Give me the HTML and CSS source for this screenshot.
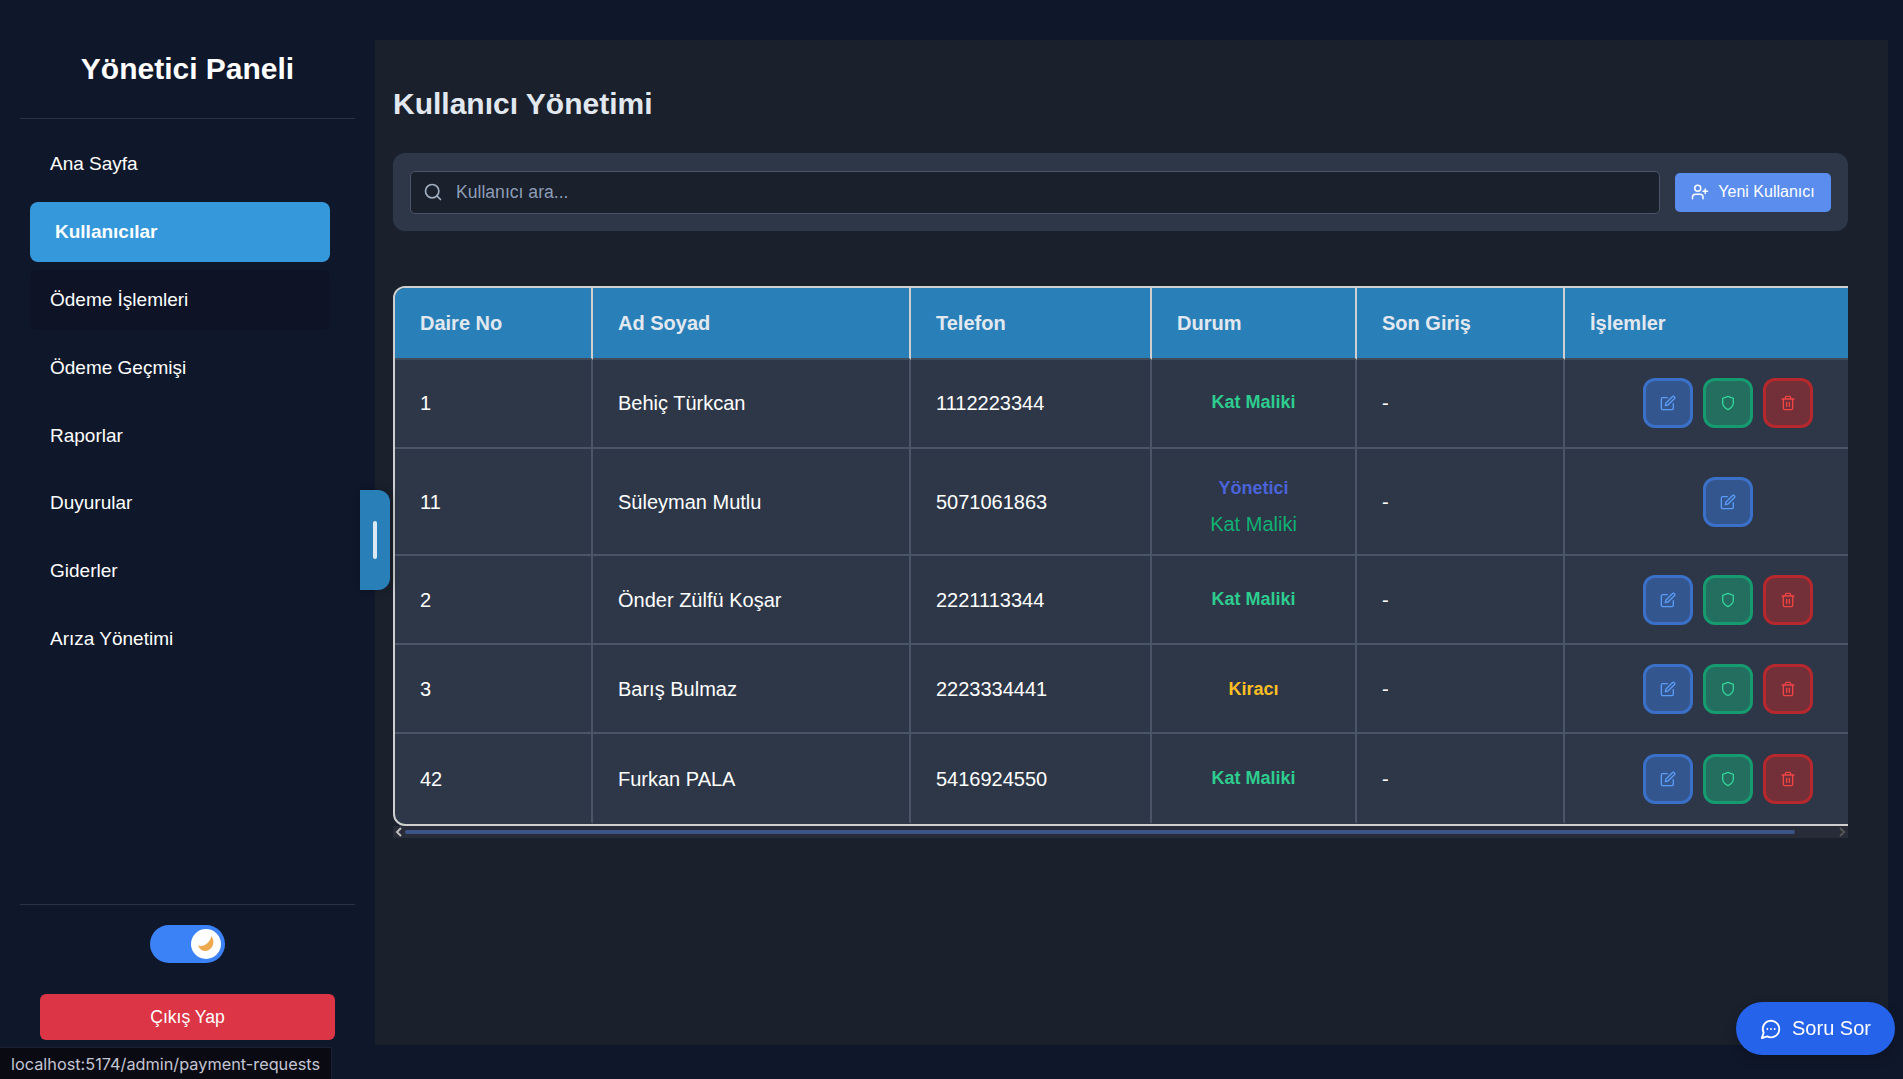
FILE: index.html
```html
<!DOCTYPE html>
<html lang="tr">
<head>
    <meta charset="UTF-8">
    <title>Yönetici Paneli</title>
    <link rel="stylesheet" href="styles.css">
</head>
<body>
    <aside class="sidebar">
        <div class="sidebar-header">
            <h2>Yönetici Paneli</h2>
        </div>
        <nav class="sidebar-nav">
            <a href="#" class="nav-item">Ana Sayfa</a>
            <a href="#" class="nav-item active">Kullanıcılar</a>
            <a href="#" class="nav-item hovered">Ödeme İşlemleri</a>
            <a href="#" class="nav-item">Ödeme Geçmişi</a>
            <a href="#" class="nav-item">Raporlar</a>
            <a href="#" class="nav-item">Duyurular</a>
            <a href="#" class="nav-item">Giderler</a>
            <a href="#" class="nav-item">Arıza Yönetimi</a>
        </nav>
        <div class="sidebar-footer">
            <div class="theme-toggle">
                <span class="toggle-knob">
                    <svg width="18" height="18" viewBox="0 0 18 18"><path d="M14.500 1C18 6 16.500 13 11 15.500 7 17 2.500 15 1 10.500 4.500 11.500 8 10.500 10.500 8 12.500 6 14 3.500 14.500 1z" fill="#eea94e"/></svg>
                </span>
            </div>
            <button class="logout-button">Çıkış Yap</button>
        </div>
    </aside>

    <button class="collapse-handle" aria-label="Menü"><span></span></button>

    <main class="content">
        <h1>Kullanıcı Yönetimi</h1>

        <div class="toolbar">
            <div class="search-box">
                <svg width="20" height="20" viewBox="0 0 24 24" fill="none" stroke="#a0aec0" stroke-width="2" stroke-linecap="round" stroke-linejoin="round"><circle cx="11" cy="11" r="8"/><path d="m21 21-4.300-4.300"/></svg>
                <input type="text" placeholder="Kullanıcı ara...">
            </div>
            <button class="new-user-button">
                <svg width="18" height="18" viewBox="0 0 24 24" fill="none" stroke="currentColor" stroke-width="2" stroke-linecap="round" stroke-linejoin="round"><path d="M16 21v-2a4 4 0 0 0-4-4H6a4 4 0 0 0-4 4v2"/><circle cx="9" cy="7" r="4"/><path d="M19 8v6M22 11h-6"/></svg>
                Yeni Kullanıcı
            </button>
        </div>

        <div class="table-wrap">
            <table class="users-table">
                <colgroup>
                    <col class="col-no"><col class="col-name"><col class="col-phone"><col class="col-status"><col class="col-login"><col class="col-actions">
                </colgroup>
                <thead>
                    <tr>
                        <th>Daire No</th>
                        <th>Ad Soyad</th>
                        <th>Telefon</th>
                        <th>Durum</th>
                        <th>Son Giriş</th>
                        <th>İşlemler</th>
                    </tr>
                </thead>
                <tbody>
                    <tr>
                        <td>1</td>
                        <td>Behiç Türkcan</td>
                        <td>1112223344</td>
                        <td class="status"><span class="role owner">Kat Maliki</span></td>
                        <td>-</td>
                        <td class="action-cell">
                            <div class="actions">
                                <button class="icon-btn edit"><svg width="16" height="16" viewBox="0 0 24 24" fill="none" stroke="currentColor" stroke-width="2" stroke-linecap="round" stroke-linejoin="round"><path d="M11 4H4a2 2 0 0 0-2 2v14a2 2 0 0 0 2 2h14a2 2 0 0 0 2-2v-7"/><path d="M18.500 2.500a2.121 2.121 0 0 1 3 3L12 15l-4 1 1-4 9.500-9.500z"/></svg></button>
                                <button class="icon-btn shield"><svg width="16" height="16" viewBox="0 0 24 24" fill="none" stroke="currentColor" stroke-width="2" stroke-linecap="round" stroke-linejoin="round"><path d="M12 22s8-4 8-10V5l-8-3-8 3v7c0 6 8 10 8 10z"/></svg></button>
                                <button class="icon-btn trash"><svg width="16" height="16" viewBox="0 0 24 24" fill="none" stroke="currentColor" stroke-width="2" stroke-linecap="round" stroke-linejoin="round"><path d="M3 6h18M19 6v14a2 2 0 0 1-2 2H7a2 2 0 0 1-2-2V6M8 6V4a2 2 0 0 1 2-2h4a2 2 0 0 1 2 2v2M10 11v6M14 11v6"/></svg></button>
                            </div>
                        </td>
                    </tr>
                    <tr class="two-lines">
                        <td>11</td>
                        <td>Süleyman Mutlu</td>
                        <td>5071061863</td>
                        <td class="status">
                            <span class="role manager">Yönetici</span>
                            <span class="role-sub">Kat Maliki</span>
                        </td>
                        <td>-</td>
                        <td class="action-cell">
                            <div class="actions">
                                <button class="icon-btn edit"><svg width="16" height="16" viewBox="0 0 24 24" fill="none" stroke="currentColor" stroke-width="2" stroke-linecap="round" stroke-linejoin="round"><path d="M11 4H4a2 2 0 0 0-2 2v14a2 2 0 0 0 2 2h14a2 2 0 0 0 2-2v-7"/><path d="M18.500 2.500a2.121 2.121 0 0 1 3 3L12 15l-4 1 1-4 9.500-9.500z"/></svg></button>
                            </div>
                        </td>
                    </tr>
                    <tr>
                        <td>2</td>
                        <td>Önder Zülfü Koşar</td>
                        <td>2221113344</td>
                        <td class="status"><span class="role owner">Kat Maliki</span></td>
                        <td>-</td>
                        <td class="action-cell">
                            <div class="actions">
                                <button class="icon-btn edit"><svg width="16" height="16" viewBox="0 0 24 24" fill="none" stroke="currentColor" stroke-width="2" stroke-linecap="round" stroke-linejoin="round"><path d="M11 4H4a2 2 0 0 0-2 2v14a2 2 0 0 0 2 2h14a2 2 0 0 0 2-2v-7"/><path d="M18.500 2.500a2.121 2.121 0 0 1 3 3L12 15l-4 1 1-4 9.500-9.500z"/></svg></button>
                                <button class="icon-btn shield"><svg width="16" height="16" viewBox="0 0 24 24" fill="none" stroke="currentColor" stroke-width="2" stroke-linecap="round" stroke-linejoin="round"><path d="M12 22s8-4 8-10V5l-8-3-8 3v7c0 6 8 10 8 10z"/></svg></button>
                                <button class="icon-btn trash"><svg width="16" height="16" viewBox="0 0 24 24" fill="none" stroke="currentColor" stroke-width="2" stroke-linecap="round" stroke-linejoin="round"><path d="M3 6h18M19 6v14a2 2 0 0 1-2 2H7a2 2 0 0 1-2-2V6M8 6V4a2 2 0 0 1 2-2h4a2 2 0 0 1 2 2v2M10 11v6M14 11v6"/></svg></button>
                            </div>
                        </td>
                    </tr>
                    <tr>
                        <td>3</td>
                        <td>Barış Bulmaz</td>
                        <td>2223334441</td>
                        <td class="status"><span class="role tenant">Kiracı</span></td>
                        <td>-</td>
                        <td class="action-cell">
                            <div class="actions">
                                <button class="icon-btn edit"><svg width="16" height="16" viewBox="0 0 24 24" fill="none" stroke="currentColor" stroke-width="2" stroke-linecap="round" stroke-linejoin="round"><path d="M11 4H4a2 2 0 0 0-2 2v14a2 2 0 0 0 2 2h14a2 2 0 0 0 2-2v-7"/><path d="M18.500 2.500a2.121 2.121 0 0 1 3 3L12 15l-4 1 1-4 9.500-9.500z"/></svg></button>
                                <button class="icon-btn shield"><svg width="16" height="16" viewBox="0 0 24 24" fill="none" stroke="currentColor" stroke-width="2" stroke-linecap="round" stroke-linejoin="round"><path d="M12 22s8-4 8-10V5l-8-3-8 3v7c0 6 8 10 8 10z"/></svg></button>
                                <button class="icon-btn trash"><svg width="16" height="16" viewBox="0 0 24 24" fill="none" stroke="currentColor" stroke-width="2" stroke-linecap="round" stroke-linejoin="round"><path d="M3 6h18M19 6v14a2 2 0 0 1-2 2H7a2 2 0 0 1-2-2V6M8 6V4a2 2 0 0 1 2-2h4a2 2 0 0 1 2 2v2M10 11v6M14 11v6"/></svg></button>
                            </div>
                        </td>
                    </tr>
                    <tr>
                        <td>42</td>
                        <td>Furkan PALA</td>
                        <td>5416924550</td>
                        <td class="status"><span class="role owner">Kat Maliki</span></td>
                        <td>-</td>
                        <td class="action-cell">
                            <div class="actions">
                                <button class="icon-btn edit"><svg width="16" height="16" viewBox="0 0 24 24" fill="none" stroke="currentColor" stroke-width="2" stroke-linecap="round" stroke-linejoin="round"><path d="M11 4H4a2 2 0 0 0-2 2v14a2 2 0 0 0 2 2h14a2 2 0 0 0 2-2v-7"/><path d="M18.500 2.500a2.121 2.121 0 0 1 3 3L12 15l-4 1 1-4 9.500-9.500z"/></svg></button>
                                <button class="icon-btn shield"><svg width="16" height="16" viewBox="0 0 24 24" fill="none" stroke="currentColor" stroke-width="2" stroke-linecap="round" stroke-linejoin="round"><path d="M12 22s8-4 8-10V5l-8-3-8 3v7c0 6 8 10 8 10z"/></svg></button>
                                <button class="icon-btn trash"><svg width="16" height="16" viewBox="0 0 24 24" fill="none" stroke="currentColor" stroke-width="2" stroke-linecap="round" stroke-linejoin="round"><path d="M3 6h18M19 6v14a2 2 0 0 1-2 2H7a2 2 0 0 1-2-2V6M8 6V4a2 2 0 0 1 2-2h4a2 2 0 0 1 2 2v2M10 11v6M14 11v6"/></svg></button>
                            </div>
                        </td>
                    </tr>
                </tbody>
            </table>
        </div>
        <div class="table-scrollbar">
            <svg class="scroll-arrow" width="12" height="12" viewBox="0 0 12 12"><path d="M8 2 4 6l4 4" fill="none" stroke="#bbb" stroke-width="2"/></svg>
            <div class="scroll-track"><div class="scroll-thumb"></div></div>
            <svg class="scroll-arrow" width="12" height="12" viewBox="0 0 12 12"><path d="M4 2l4 4-4 4" fill="none" stroke="#555" stroke-width="2"/></svg>
        </div>
    </main>

    <button class="ask-button">
        <svg width="22" height="22" viewBox="0 0 24 24" fill="none" stroke="currentColor" stroke-width="2" stroke-linecap="round" stroke-linejoin="round"><path d="M7.900 20A9 9 0 1 0 4 16.100L2 22z"/><path d="M8 12h.01M12 12h.01M16 12h.01"/></svg>
        Soru Sor
    </button>

    <div class="status-bubble">localhost:5174/admin/payment-requests</div>
</body>
</html>
```
FILE: styles.css
```css
* {
    box-sizing: border-box;
    margin: 0;
    padding: 0;
}

html,
body {
    height: 100%;
}

body {
    display: flex;
    font-family: "Liberation Sans", Arial, sans-serif;
    background-color: #0f172a;
    color: #fff;
    overflow: hidden;
}

button {
    font-family: inherit;
    border: none;
    cursor: pointer;
}

/* Sidebar */
.sidebar {
    width: 375px;
    flex-shrink: 0;
    height: 100%;
    display: flex;
    flex-direction: column;
    padding: 20px 20px 39px;
}

.sidebar-header {
    height: 99px;
    padding-top: 30px;
    border-bottom: 1px solid #2a3344;
    text-align: center;
    flex-shrink: 0;
}

.sidebar-header h2 {
    font-size: 30px;
    line-height: 38px;
    font-weight: 700;
}

.sidebar-nav {
    display: flex;
    flex-direction: column;
    gap: 8px;
    padding: 15px 25px 0 10px;
}

.nav-item {
    display: block;
    height: 59.9px;
    line-height: 59.9px;
    padding: 0 20px;
    font-size: 19px;
    color: #fff;
    text-decoration: none;
    border-radius: 8px;
}

.nav-item.active {
    background: #3498db;
    padding-left: 25px;
    font-weight: 700;
}

.nav-item.hovered {
    background: #0e1426;
}

.sidebar-footer {
    margin-top: auto;
    border-top: 1px solid #2a3344;
    padding-top: 20px;
    display: flex;
    flex-direction: column;
    align-items: center;
}

.theme-toggle {
    width: 75px;
    height: 38px;
    border-radius: 19px;
    background: #3b82f6;
    display: flex;
    align-items: center;
    justify-content: flex-end;
    padding-right: 4px;
}

.toggle-knob {
    width: 30px;
    height: 30px;
    border-radius: 50%;
    background: #fff;
    display: flex;
    align-items: center;
    justify-content: center;
}

.logout-button {
    width: 295px;
    height: 46px;
    margin-top: 31px;
    background: #dc3545;
    color: #fff;
    font-size: 17.6px;
    border-radius: 6px;
}

.collapse-handle {
    position: fixed;
    left: 360px;
    top: 490px;
    width: 30px;
    height: 100px;
    background: #2980b9;
    border-radius: 0 12px 12px 0;
    box-shadow: 2px 0 8px rgba(0, 0, 0, 0.25);
    z-index: 10;
}

.collapse-handle span {
    display: block;
    width: 4px;
    height: 38px;
    margin-left: 13px;
    background: #dbe9f5;
    border-radius: 2px;
}

/* Main content */
.content {
    flex: 1;
    min-width: 0;
    margin: 40px 15px 34px 0;
    padding: 46px 40px 0 18px;
    background: #1a202c;
}

.content h1 {
    font-size: 30px;
    line-height: 36px;
    font-weight: 700;
    color: #e2e8f0;
    margin-bottom: 31px;
}

.toolbar {
    display: flex;
    align-items: center;
    gap: 15px;
    height: 78px;
    padding: 0 17px;
    background: #2d3748;
    border-radius: 12px;
}

.search-box {
    flex: 1;
    height: 43px;
    display: flex;
    align-items: center;
    gap: 13px;
    padding: 0 12px;
    background: #1a202c;
    border: 1px solid #4a5568;
    border-radius: 5px;
}

.search-box input {
    flex: 1;
    background: none;
    border: none;
    outline: none;
    color: #fff;
    font-family: inherit;
    font-size: 17.6px;
}

.search-box input::placeholder {
    color: #8d9db6;
}

.new-user-button {
    width: 156px;
    height: 39px;
    display: flex;
    align-items: center;
    justify-content: center;
    gap: 9px;
    background: #5a8dee;
    color: #fff;
    font-size: 16px;
    border-radius: 5px;
}

/* Users table */
.table-wrap {
    margin-top: 55px;
    overflow: hidden;
}

.users-table {
    width: 1498px;
    table-layout: fixed;
    border-collapse: separate;
    border-spacing: 0;
    border: 2px solid #cfcfcf;
    border-radius: 12px;
    overflow: hidden;
    background: #2d3748;
}

.col-no { width: 198px; }
.col-name { width: 318px; }
.col-phone { width: 241px; }
.col-status { width: 205px; }
.col-login { width: 208px; }
.col-actions { width: 326px; }

.users-table th {
    height: 72px;
    padding: 0 25px;
    text-align: left;
    font-size: 20px;
    font-weight: 700;
    color: #e2e8f0;
    background: #2980b9;
    border-right: 2px solid #cfcfcf;
    border-bottom: 2px solid #3f4a5b;
}

.users-table td {
    height: 89.4px;
    padding: 2px 25px 0;
    font-size: 20px;
    color: #fff;
    border-right: 2px solid #4a5568;
    border-bottom: 2px solid #4a5568;
}

.users-table tbody tr:first-child td {
    height: 88.6px;
    padding-top: 0;
}

.users-table tr.two-lines td {
    height: 107px;
}

.users-table td.action-cell {
    padding-top: 1px;
}

.users-table tbody tr:first-child td.action-cell {
    padding-top: 0;
    padding-bottom: 1px;
}

.users-table tr.two-lines td.status {
    padding-top: 12px;
}

.users-table th:last-child,
.users-table td:last-child {
    border-right: none;
}

.users-table tbody tr:last-child td {
    border-bottom-color: transparent;
}

.users-table td.status {
    text-align: center;
}

.role {
    display: block;
    padding-bottom: 1px;
    font-size: 18px;
    font-weight: 700;
}

.role.owner { color: #2ecc8f; }
.role.manager { color: #4a63d8; }
.role.tenant { color: #fbbf24; }

.role-sub {
    display: block;
    margin-top: 13px;
    font-size: 20px;
    color: #10b073;
}

.actions {
    display: flex;
    justify-content: center;
    gap: 10px;
}

.icon-btn {
    width: 50px;
    height: 50px;
    border-width: 3px;
    border-style: solid;
    border-radius: 12px;
    display: flex;
    align-items: center;
    justify-content: center;
}

.icon-btn.edit {
    background: #34568f;
    border-color: #3a70c8;
    color: #5a9cf5;
}

.icon-btn.shield {
    background: #236e5e;
    border-color: #169a70;
    color: #34d399;
}

.icon-btn.trash {
    background: #733039;
    border-color: #b5282d;
    color: #ef4444;
}

/* drawn scrollbar under the table */
.table-scrollbar {
    display: flex;
    align-items: center;
    height: 12px;
    background: #282c38;
}

.scroll-arrow {
    flex-shrink: 0;
}

.scroll-track {
    flex: 1;
}

.scroll-thumb {
    width: 97.1%;
    height: 4px;
    background: #3d5488;
    border-radius: 2px;
}

/* Floating things */
.ask-button {
    position: fixed;
    right: 8px;
    bottom: 24px;
    width: 159px;
    height: 53px;
    display: flex;
    align-items: center;
    justify-content: center;
    gap: 10px;
    background: #2563eb;
    color: #fff;
    font-size: 20px;
    border-radius: 27px;
    box-shadow: 0 4px 12px rgba(0, 0, 0, 0.2);
}

.status-bubble {
    position: fixed;
    left: 0;
    bottom: 0;
    width: 332px;
    height: 32px;
    line-height: 33px;
    padding-left: 11px;
    background: #0a0a12;
    border: 1px solid #1d2030;
    border-left: none;
    border-bottom: none;
    font-family: Inter, sans-serif;
    font-size: 16.3px;
    color: #c4c6d4;
    white-space: nowrap;
}
```
